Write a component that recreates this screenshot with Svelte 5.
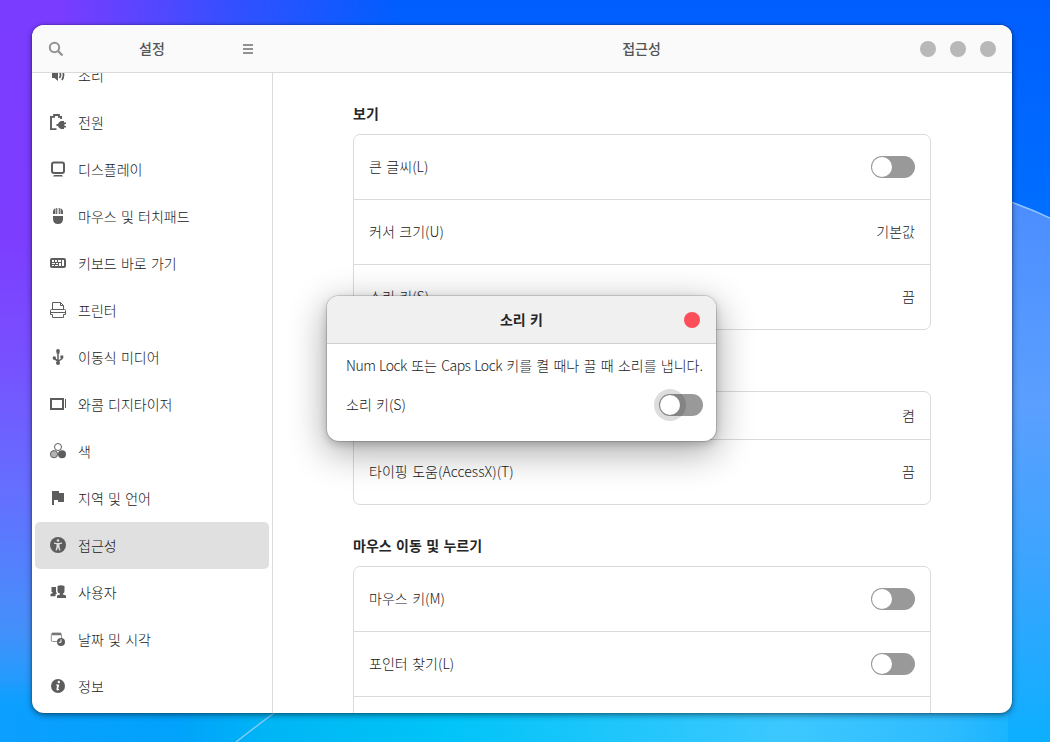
<script>
  const items = [
    ['sound', '소리'], ['power', '전원'], ['display', '디스플레이'], ['mouse', '마우스 및 터치패드'],
    ['keyboard', '키보드 바로 가기'], ['printer', '프린터'], ['usb', '이동식 미디어'], ['tablet', '와콤 디지타이저'],
    ['color', '색'], ['flag', '지역 및 언어'], ['access', '접근성'], ['users', '사용자'], ['date', '날짜 및 시각'], ['info', '정보'],
  ];
  const groups = [
    { title: '보기', rows: [{ label: '큰 글씨(L)', toggle: true }, { label: '커서 크기(U)', value: '기본값' }, { label: '소리 키(S)', value: '끔' }] },
    { title: '', rows: [{ label: '', value: '켬', short: true }, { label: '타이핑 도움(AccessX)(T)', value: '끔' }] },
    { title: '마우스 이동 및 누르기', rows: [{ label: '마우스 키(M)', toggle: true }, { label: '포인터 찾기(L)', toggle: true }, { label: '' }] },
  ];
</script>

{#snippet icon(name)}
  <svg class="icon" viewBox="0 0 16 16" width="16" height="16" fill="currentColor">
    {#if name === 'sound'}
      <path d="M2 5h2.500L8 2v12l-3.500-3H2z" /><path d="M9.500 5q2 3 0 6M12 3q3 5 0 10" fill="none" stroke="currentColor" stroke-width="1.700" />
    {:else if name === 'power'}
      <path d="M11.100 5V2.900H8.900V1H4.100v1.900H1v12.200h5.500" fill="none" stroke="currentColor" stroke-width="1.900" />
      <path d="M11 7h3v1.500h2v1.500h-1.500v2H16v1.500h-2V15h-3q-2.500-.8-3-3H6.500v-2H8q.5-2.200 3-3z" />
    {:else if name === 'display'}
      <rect x="2" y="1.500" width="12" height="10.500" rx="2" fill="none" stroke="currentColor" stroke-width="2" /><path d="M4 14h8l1 1.500H3z" />
    {:else if name === 'mouse'}
      <path d="M7.300.1V6H3V4Q3 .4 7.300.1zM8.700.1Q13 .4 13 4v2H8.700zM3 8h10v3q0 5-5 5t-5-5z" /><path d="M5.700 0v6M10.300 0v6" stroke="#fff" stroke-width=".7" />
    {:else if name === 'keyboard'}
      <path fill-rule="evenodd" d="M2 3h12q2 0 2 2v6q0 2-2 2H2q-2 0-2-2V5q0-2 2-2zM2 5v2h2V5zM5 5v2h2V5zM8 5v2h3V5zM2 8v1h3V8zM6 8v1h2V8zM9 8v3h2V8zM12 5v6h2V5zM2 10v1h2v-1zM5 10v1h3v-1z" />
    {:else if name === 'printer'}
      <path d="M2.500 7.500v-7h8l3 3v4M10.500.5v3h3M2.500 12.500h-2v-4q0-1 1-1h13q1 0 1 1v4h-2M.5 10.500h15M2.500 12.500v3h11v-3" fill="none" stroke="currentColor" />
    {:else if name === 'usb'}
      <path d="M8 2v12M8 12 4 9.500V8M8 12.500l4-3V7" fill="none" stroke="currentColor" stroke-width="1.500" /><circle cx="8" cy="1.900" r="1.900" /><path d="M6 4.500 8 2l2 2.500z" /><circle cx="4.300" cy="9" r="1.700" /><path d="M10.400 6.500h2.900v2.700h-2.900z" /><circle cx="8" cy="14" r="2" />
    {:else if name === 'tablet'}
      <path d="M1 3h12v10H1z" fill="none" stroke="currentColor" stroke-width="2" /><path d="M15 3h1v9h-1z" />
    {:else if name === 'color'}
      <circle cx="8" cy="4" r="3.500" fill="none" stroke="currentColor" /><circle cx="4" cy="11.200" r="3.600" fill="#b3b3b3" stroke="currentColor" /><circle cx="12" cy="11.200" r="4" />
    {:else if name === 'flag'}
      <path d="M2 1h7v2h5v9H8v-2H4v5H2z" />
    {:else if name === 'access'}
      <circle cx="8" cy="8" r="8" /><circle cx="8" cy="3.500" r="1.300" fill="#e0e0e0" /><path d="M4 5.500 7 6h2l3-.5v1.200l-2.500.6v2.200l1 4H9.200L8 10.300l-1.200 3.200H5.500l1-4V7.300L4 6.700z" fill="#e0e0e0" />
    {:else if name === 'users'}
      <path d="M7.500 2Q11 .4 14.500 2v5q0 2-1.500 2.500v1l3 1V14H7v-2.500l3-1v-1Q7.500 9 7.500 7zM1.500 3H6v5l1 1.500-1.500 1v1.800H.5V10l2-.8V8h-1z" />
    {:else if name === 'date'}
      <rect x="1.300" y="2" width="10.200" height="8.500" rx="1.500" fill="none" stroke="#929292" /><path d="M2 2h9v2.300H2z" fill="#777" /><circle cx="11" cy="11" r="4" /><path d="M11 8.300v3H8.700" fill="none" stroke="#fff" />
    {:else}
      <circle cx="8" cy="8" r="7" /><circle cx="8.800" cy="4" r="1.200" fill="#fff" /><path d="M6 6.500h3.300L8.200 11h1l-.2 1q-3 1.300-2.500-1L7 7.500H6z" fill="#fff" />
    {/if}
  </svg>
{/snippet}

<div class="desktop">
  <div class="left-light"></div>
  <div class="bottom-light"></div>
  <svg class="lines" viewBox="0 0 1050 742" fill="none">
    <path d="M1008 201Q1031 209 1050 218V742H1008Z" fill="url(#glow)" />
    <path d="M1008 201Q1031 209 1050 218M236 742Q254 728 278 710" stroke="#a7d2ff" stroke-width="1.500" opacity=".8" />
    <defs><linearGradient id="glow" x1="0" y1="200" x2="0" y2="742" gradientUnits="userSpaceOnUse"><stop stop-color="#4c8dff" /><stop offset=".38" stop-color="#5b9fff" /><stop offset=".7" stop-color="#38a5ff" /><stop offset="1" stop-color="#0cafff" /></linearGradient></defs>
  </svg>
  <main class="window">
    <header class="bar">
      <div class="side-bar">
        <svg width="16" height="16" viewBox="0 0 16 16" fill="none" stroke="#929292" stroke-width="2"><circle cx="6.500" cy="6.500" r="4.700" /><path d="m10 10 4.500 4.500" stroke-width="2.300" /></svg>
        <b>설정</b>
        <svg width="16" height="16" viewBox="0 0 16 16" stroke="#929292" stroke-width="2"><path d="M3 4h10M3 8h10M3 12h10" /></svg>
      </div>
      <b class="title">접근성</b>
      <div class="controls"><i></i><i></i><i></i></div>
    </header>
    <div class="body">
      <nav>
        {#each items as [name, label]}
          <div class="item" class:active={name === 'access'}>{@render icon(name)}<span>{label}</span></div>
        {/each}
      </nav>
      <div class="content">
        {#each groups as group}
          <section>
            <h2>{group.title}</h2>
            <div class="card">
              {#each group.rows as row}
                <div class="row" class:short={row.short}>
                  <span class="label">{row.label}</span>
                  {#if row.toggle}<span class="switch"></span>{:else}<span class="label">{row.value ?? ''}</span>{/if}
                </div>
              {/each}
            </div>
          </section>
        {/each}
      </div>
    </div>
  </main>
  <div class="dialog">
    <div class="dialog-head"><b>소리 키</b><i></i></div>
    <div class="dialog-body">
      <p><span class="latin">Num Lock</span> 또는 <span class="latin">Caps Lock</span> 키를 켤 때나 끌 때 소리를 냅니다.</p>
      <div class="dialog-row"><span class="label">소리 키(S)</span><span class="switch focus"></span></div>
    </div>
  </div>
</div>

<style>
  :global(body) { margin: 0; overflow: hidden; }
  * { box-sizing: border-box; }
  .desktop {
    position: relative; width: 1050px; height: 742px; padding: 25px 38px 29px 32px; overflow: hidden;
    font: 300 14px/20px "Noto Sans CJK KR", sans-serif; color: #181818; word-spacing: 1.2px;
    background: linear-gradient(180deg, #005eff 0, #0072ff 35%, #0098ff 90%, #00b5ff 100%);
  }
  .left-light, .bottom-light { position: absolute; inset: 0; }
  .left-light {
    background: linear-gradient(180deg, #7a3cff 0, #7d3dff 32%, #7850ff 48%, #6272ff 68%, #4490fa 85%, #12a0ff 95%, #00a5ff 100%);
    mask-image: linear-gradient(90deg, #000 0, #000 60px, #0006 240px, transparent 400px);
  }
  .bottom-light {
    background: linear-gradient(90deg, #0c9fff 0, #00a3fb 17%, #00b6f5 26%, #00c4f8 42%, #3cc8ff 75%, #2fbcff 90%, #0cafff 100%);
    mask-image: linear-gradient(0deg, #000 0, #000 29px, transparent 60px);
  }
  .lines { position: absolute; inset: 0; width: 1050px; height: 742px; }
  .window {
    position: relative; display: flex; flex-direction: column; height: 688px; overflow: hidden;
    border-radius: 12px; background: #fff; box-shadow: 0 2px 6px #0007, 0 0 2px #0006;
  }
  .bar { display: flex; align-items: center; height: 48px; flex: none; border-bottom: 1px solid #dadada; background: #fafafa; color: #555; }
  .side-bar { width: 240px; padding: 0 16px; display: flex; align-items: center; justify-content: space-between; }
  b { font-weight: 700; font-size: 14px; line-height: 20px; padding-bottom: 1px; }
  .bar b { font-weight: 500; }
  .title { flex: 1; text-align: center; padding-left: 91px; }
  .controls { display: flex; gap: 14px; padding-right: 16px; }
  .controls i, .dialog-head i { width: 16px; height: 16px; border-radius: 50%; background: #b8b8b8; }
  .body { display: flex; height: 640px; }
  nav { width: 241px; flex: none; padding: 0 3px 3px; border-right: 1px solid #dadada; display: flex; flex-direction: column; justify-content: flex-end; overflow: hidden; }
  .item { height: 47px; flex: none; display: flex; align-items: center; gap: 12px; padding: 0 0 1px 15px; border-radius: 5px; white-space: nowrap; }
  .label { padding-bottom: 2px; }
  .active { background: #e0e0e0; }
  .icon { color: #5d5d5d; flex: none; }
  .content { flex: 1; padding: 30px 81px 0 80px; overflow: hidden; }
  section { margin-bottom: 30px; }
  h2 { margin: 0 0 11px; height: 20px; font: 700 14px/20px "Noto Sans CJK KR", sans-serif; color: #262626; }
  .card { border: 1px solid #dadada; border-radius: 7px; }
  .row { height: 65px; display: flex; align-items: center; justify-content: space-between; padding: 0 15px; border-bottom: 1px solid #dadada; letter-spacing: .05px; }
  .row:last-child { height: 64px; border: 0; }
  .row.short { height: 48px; }
  .switch { position: relative; width: 44px; height: 22px; border-radius: 11px; background: #999; }
  .switch::after { content: ''; position: absolute; left: 1px; top: 1px; width: 20px; height: 20px; border-radius: 50%; background: #fff; }
  .focus::after { box-shadow: 0 0 0 6px #0002; }
  .dialog {
    position: absolute; left: 327px; top: 296px; width: 389px; height: 145px; border-radius: 12px; background: #fff; overflow: hidden;
    box-shadow: 0 0 0 1px #0002, 0 3px 8px #0003, 0 10px 36px 2px #0005;
  }
  .dialog-head { height: 48px; padding: 0 16px; display: flex; align-items: center; background: #f0f0f0; border-bottom: 1px solid #d0d0d0; color: #262626; }
  .dialog-head b { flex: 1; text-align: center; padding-left: 16px; }
  .dialog-head i { background: #fc4f59; }
  .dialog-body { padding: 11px 13px 0 19px; }
  p { margin: 0; white-space: nowrap; word-spacing: 1.2px; }
  .latin { letter-spacing: -.5px; }
  .dialog-row { margin-top: 19px; height: 22px; display: flex; align-items: center; justify-content: space-between; }
</style>
